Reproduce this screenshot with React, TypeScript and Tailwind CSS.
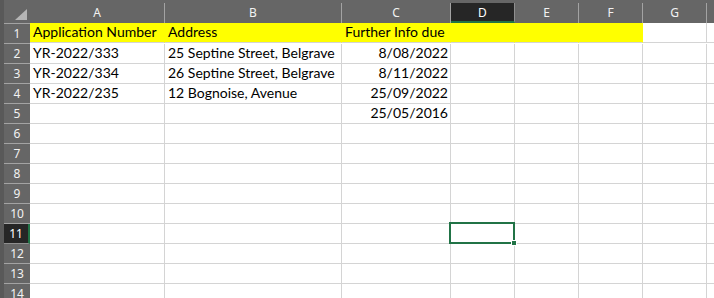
const cols = [
  { key: "A", w: "w-[135px]" },
  { key: "B", w: "w-[177px]" },
  { key: "C", w: "w-[109px]" },
  { key: "D", w: "w-[64px]" },
  { key: "E", w: "w-[64px]" },
  { key: "F", w: "w-[64px]" },
  { key: "G", w: "w-[64px]" },
  { key: "", w: "w-[40px]" },
]

type Cell = { text: string; right?: boolean }

const data: Record<number, Record<string, Cell>> = {
  1: {
    A: { text: "Application Number" },
    B: { text: "Address" },
    C: { text: "Further Info due" },
  },
  2: {
    A: { text: "YR-2022/333" },
    B: { text: "25 Septine Street, Belgrave" },
    C: { text: "8/08/2022", right: true },
  },
  3: {
    A: { text: "YR-2022/334" },
    B: { text: "26 Septine Street, Belgrave" },
    C: { text: "8/11/2022", right: true },
  },
  4: {
    A: { text: "YR-2022/235" },
    B: { text: "12 Bognoise, Avenue" },
    C: { text: "25/09/2022", right: true },
  },
  5: {
    C: { text: "25/05/2016", right: true },
  },
}

const yellow = ["A", "B", "C", "D", "E", "F"]
const rows = Array.from({ length: 14 }, (_, i) => i + 1)

const headFont = { fontFamily: '"Noto Sans", "Open Sans", sans-serif' }
const cellFont = { fontFamily: 'Lato, "Liberation Sans", sans-serif' }

function ColumnHeader({ k, w }: { k: string; w: string }) {
  const active = k === "D"
  return (
    <div
      className={`${w} shrink-0 h-[20px] flex items-center justify-center text-[12px] border-r ${
        active
          ? "bg-[#262626] text-white border-[#8f8f8f] border-b-2 border-b-[#217346]"
          : "text-[#f2f2f2] border-[#a3a3a3]"
      }`}
      style={headFont}
    >
      <span className={active ? "mt-[1px]" : ""}>{k}</span>
    </div>
  )
}

function GridCell({ row, k, w }: { row: number; k: string; w: string }) {
  const cell = data[row]?.[k]
  const filled = row === 1 && yellow.includes(k)
  const selected = row === 11 && k === "D"
  return (
    <div
      className={`${w} shrink-0 h-[20px] relative flex items-end border-b border-b-[#d4d4d4] border-r ${
        filled ? "bg-[#ffff00] border-r-[#ffff00]" : "bg-white border-r-[#d4d4d4]"
      } ${cell?.right ? "justify-end pr-[2px]" : "pl-[3px]"}`}
    >
      {cell && (
        <span
          className="text-[14px] leading-none pb-[3px] text-black whitespace-nowrap"
          style={cellFont}
        >
          {cell.text}
        </span>
      )}
      {selected && (
        <div className="absolute -left-[2px] -top-[2px] -right-[1px] -bottom-[1px] border-2 border-[#217346] z-10">
          <div className="absolute -right-[4px] -bottom-[4px] w-[6px] h-[6px] bg-[#217346] border border-white" />
        </div>
      )}
    </div>
  )
}

export default function App() {
  return (
    <div className="w-[714px] h-[298px] overflow-hidden bg-white flex">
      {/* Left edge strip */}
      <div className="w-[4px] shrink-0 bg-[#595959]" />

      <div className="flex flex-col flex-1">
        {/* Column headers */}
        <div className="flex bg-[#666666] pt-[3px]">
          <div className="w-[26px] shrink-0 h-[20px] flex items-end justify-end pr-[3px] pb-[3px]">
            <svg width="12" height="11" viewBox="0 0 12 11">
              <polygon points="12,0 12,11 0,11" fill="#b5b5b5" />
            </svg>
          </div>
          {cols.map((c, i) => (
            <ColumnHeader key={i} k={c.key} w={c.w} />
          ))}
        </div>

        {/* Rows */}
        {rows.map((r) => (
          <div key={r} className="flex">
            <div
              className={`w-[26px] shrink-0 h-[20px] flex items-center justify-center text-[12px] border-b ${
                r === 11
                  ? "bg-[#262626] text-white border-b-[#8f8f8f] border-r-2 border-r-[#217346]"
                  : "bg-[#666666] text-[#f2f2f2] border-b-[#a3a3a3]"
              } ${r === 1 ? "border-t border-t-[#a3a3a3] h-[21px]" : ""}`}
              style={headFont}
            >
              {r}
            </div>
            <div className="flex">
              {cols.map((c, i) => (
                <GridCell key={i} row={r} k={c.key} w={c.w} />
              ))}
            </div>
          </div>
        ))}
      </div>
    </div>
  )
}
